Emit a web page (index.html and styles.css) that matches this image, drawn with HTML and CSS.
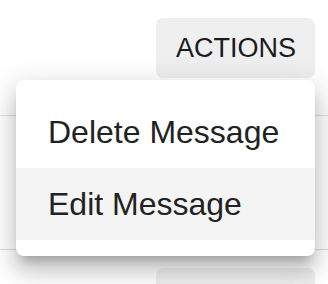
FILE: index.html
```html
<!DOCTYPE html>
<html>
<head>
<meta charset="utf-8">
<link rel="stylesheet" href="styles.css">
</head>
<body>
<div class="page">
  <div class="row row-first">
    <button class="btn">ACTIONS</button>
  </div>
  <div class="row row-mid">
    <button class="btn">ACTIONS</button>
  </div>
  <div class="row row-last">
    <button class="btn" aria-label="Actions"></button>
  </div>
  <ul class="menu">
    <li class="menu-item">Delete Message</li>
    <li class="menu-item menu-item-hover">Edit Message</li>
  </ul>
</div>
</body>
</html>
```

FILE: styles.css
```css
html, body {
  margin: 0;
  padding: 0;
  background: #fff;
  overflow: hidden;
}
.page {
  position: relative;
  width: 328px;
  height: 284px;
  overflow: hidden;
  font-family: "Liberation Sans", Arial, sans-serif;
}
.row {
  display: flex;
  justify-content: flex-end;
  align-items: flex-start;
  padding: 18px 13px 0 0;
  box-sizing: border-box;
  border-bottom: 1px solid #dcdcdc;
}
.row-first { height: 116px; }
.row-mid { height: 134px; }
.row-last { height: 34px; border-bottom: none; }
.btn {
  width: 159px;
  height: 60px;
  border: none;
  border-radius: 7px;
  background: #efefef;
  color: #1b1b1f;
  font-family: "Liberation Sans", Arial, sans-serif;
  font-size: 27px;
  padding: 0 20px;
  text-align: center;
  flex-shrink: 0;
}
.menu {
  position: absolute;
  left: 16px;
  top: 80px;
  width: 299px;
  margin: 0;
  padding: 16px 0;
  list-style: none;
  background: #fff;
  border-radius: 8px;
  box-sizing: border-box;
  box-shadow: 0 10px 10px -6px rgba(0,0,0,0.2), 0 16px 20px 2px rgba(0,0,0,0.14), 0 6px 28px 4px rgba(0,0,0,0.12);
}
.menu-item {
  padding: 12px 32px;
  line-height: 48px;
  font-size: 32px;
  color: #222;
}
.menu-item-hover {
  background: #f4f4f4;
}
```
